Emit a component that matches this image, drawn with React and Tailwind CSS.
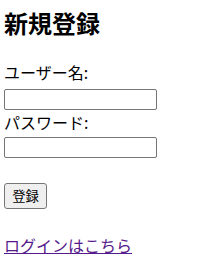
import React from 'react';

export default function App() {
  return (
    <div className="min-h-screen bg-white px-[4px] pt-[8px] text-black font-['Noto_Sans_CJK_JP','Noto_Sans',sans-serif]">
      <h2 className="text-[24px] font-bold leading-[30px]">新規登録</h2>

      <form className="mt-[22px]" onSubmit={(e) => e.preventDefault()}>
        <label className="block text-[16px] leading-[24px]">ユーザー名:</label>
        <input
          type="text"
          className="mt-[5px] block w-[153px] h-[21px] border border-[#767676] rounded-[2px] bg-white px-[2px] text-[13px] outline-none"
        />
        <label className="block text-[16px] leading-[24px]">パスワード:</label>
        <input
          type="password"
          className="mt-[3px] block w-[153px] h-[21px] border border-[#767676] rounded-[2px] bg-white px-[2px] text-[13px] outline-none"
        />
        <button
          type="submit"
          className="mt-[25px] block h-[26px] w-[43px] border border-[#767676] rounded-[3px] bg-[#efefef] text-[13.33px] leading-[18px] text-black"
        >
          登録
        </button>
      </form>

      <a href="#" className="mt-[24px] block w-fit text-[16px] leading-[24px] text-[#551a8b] underline">
        ログインはこちら
      </a>
    </div>
  );
}
